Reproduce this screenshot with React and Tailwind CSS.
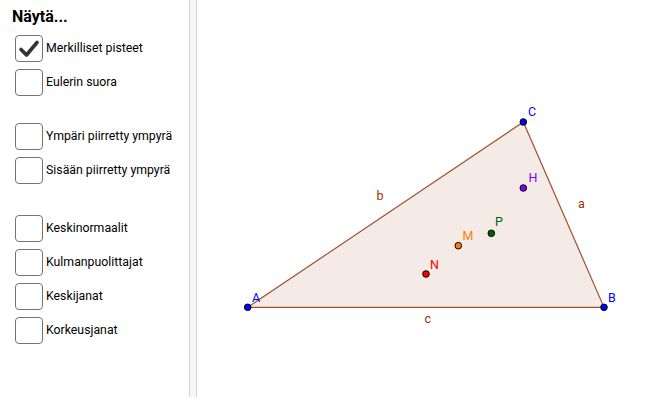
import React from "react";

const groups = [
  [
    { label: "Merkilliset pisteet", checked: true },
    { label: "Eulerin suora" },
  ],
  [
    { label: "Ympäri piirretty ympyrä" },
    { label: "Sisään piirretty ympyrä" },
  ],
  [
    { label: "Keskinormaalit" },
    { label: "Kulmanpuolittajat" },
    { label: "Keskijanat" },
    { label: "Korkeusjanat" },
  ],
];

function Check({ label, checked }) {
  return (
    <div className="flex items-center gap-[3px] h-[27px]">
      <div className="w-[28px] h-[27px] rounded-[4px] border border-[#737373] bg-white flex items-center justify-center shrink-0">
        {checked && (
          <svg width="22" height="20" viewBox="0 0 22 20">
            <path d="M3 10.5 L8.5 16 L19 3.5" fill="none" stroke="#333" strokeWidth="3.6" strokeLinecap="round" strokeLinejoin="round" />
          </svg>
        )}
      </div>
      <span className="text-[12.3px] text-black leading-none">{label}</span>
    </div>
  );
}

function Pt({ x, y, fill }) {
  return <circle cx={x} cy={y} r="3.3" fill={fill} stroke="#000" strokeWidth="1" />;
}

export default function App() {
  const A = [247.7, 307.3];
  const B = [604, 307.3];
  const C = [523.3, 122];
  return (
    <div className="w-[650px] h-[400px] flex bg-white overflow-hidden" style={{ fontFamily: "Roboto, 'Noto Sans', sans-serif" }}>
      <div className="w-[189px] shrink-0 pl-[15px] pt-[7px]">
        <div className="text-[16px] font-bold text-black leading-[20px] ml-[-3px] mb-[8px]">Näytä...</div>
        <div className="flex flex-col gap-[27px]">
          {groups.map((g, i) => (
            <div key={i} className={`flex flex-col gap-[7px] ${i === 2 ? "mt-[4px]" : ""}`}>
              {g.map((c) => (
                <Check key={c.label} {...c} />
              ))}
            </div>
          ))}
        </div>
      </div>
      <div className="w-[8px] h-[397px] shrink-0 bg-[#f6f6f6] border-x border-[#d4d4d4]" />
      <svg width="453" height="400" viewBox="197 0 453 400" className="shrink-0" style={{ fontFamily: "Roboto, 'Noto Sans', sans-serif" }}>
        <polygon
          points={`${A.join(",")} ${B.join(",")} ${C.join(",")}`}
          fill="#f5ebe6"
          stroke="#a0522d"
          strokeWidth="1.2"
        />
        <g fontSize="12.5">
          <text x="376.5" y="200" fill="#993300">b</text>
          <text x="578" y="208" fill="#993300">a</text>
          <text x="424.5" y="323" fill="#993300">c</text>
          <text x="252" y="302" fill="#0000ff">A</text>
          <text x="608" y="302" fill="#0000ff">B</text>
          <text x="528" y="116" fill="#0000ff">C</text>
          <text x="528.5" y="182" fill="#7f00ff">H</text>
          <text x="495" y="226" fill="#006400">P</text>
          <text x="462.5" y="240" fill="#ff7f00">M</text>
          <text x="430" y="269" fill="#ff0000">N</text>
        </g>
        <Pt x={A[0]} y={A[1]} fill="#0000ff" />
        <Pt x={B[0]} y={B[1]} fill="#0000ff" />
        <Pt x={C[0]} y={C[1]} fill="#0000ff" />
        <Pt x={523.3} y={188} fill="#7f00ff" />
        <Pt x={491.3} y={233.3} fill="#006400" />
        <Pt x={458.3} y={245.7} fill="#ff7f00" />
        <Pt x={426} y={274} fill="#ff0000" />
      </svg>
    </div>
  );
}
